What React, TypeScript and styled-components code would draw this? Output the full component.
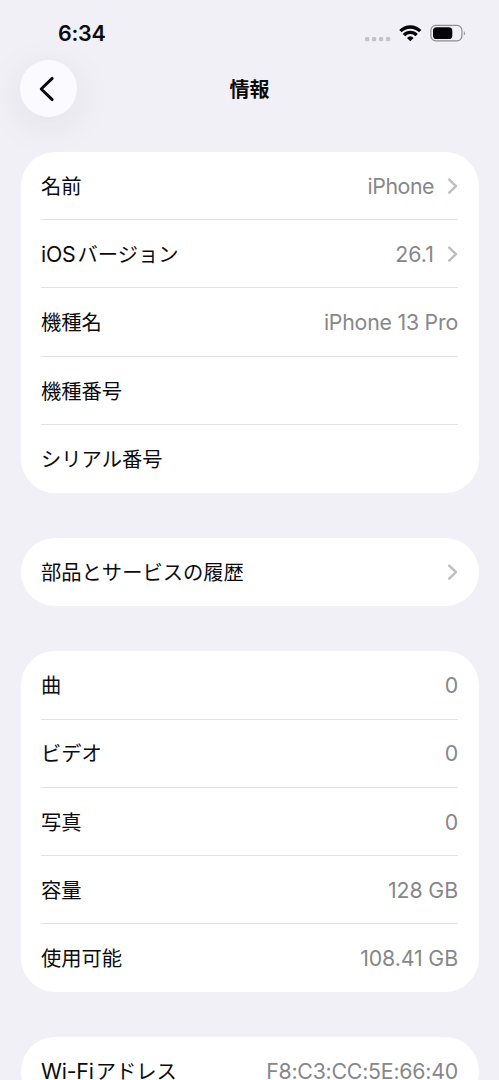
import React from 'react';
import styled, { createGlobalStyle } from 'styled-components';

const GlobalStyle = createGlobalStyle`
  html, body { margin: 0; background: #f1f0f6; }
  body { height: 1080px; overflow: hidden; }
  * { box-sizing: border-box; }
`;

const Screen = styled.main`
  width: 499px;
  height: 1080px;
  overflow: hidden;
  background: #f1f0f6;
  color: #0b0b0d;
  font-family: Inter, 'Noto Sans CJK JP', sans-serif;
`;

const StatusBar = styled.div`
  display: flex;
  align-items: center;
  justify-content: space-between;
  height: 60px;
  padding: 6px 33px 0 58px;
`;

const Clock = styled.time`
  font-size: 21.5px;
  font-weight: 600;
  line-height: 26px;
  letter-spacing: -0.3px;
`;

const StatusIcons = styled.div`
  display: flex;
  align-items: center;
  height: 26px;
  svg { display: block; }
`;

const NavBar = styled.header`
  display: grid;
  grid-template-columns: 57px 1fr 57px;
  align-items: center;
  height: 57px;
  padding: 0 20px;
`;

const BackButton = styled.button`
  display: grid;
  place-items: center;
  width: 57px;
  height: 57px;
  padding: 0 2px 0 0;
  border: 0;
  border-radius: 50%;
  background: #fbfaff;
  box-shadow: 0 8px 40px rgba(40, 40, 60, 0.08);
  svg { display: block; }
`;

const Title = styled.h1`
  margin: 0;
  padding-top: 2px;
  text-align: center;
  font-size: 20px;
  font-weight: 700;
  line-height: 28px;
`;

const Groups = styled.div`
  display: flex;
  flex-direction: column;
  gap: 45px;
  padding: 35px 20.5px 0;
`;

const Card = styled.section`
  padding: 0 20.5px;
  border-radius: 34px;
  background: #fff;
`;

const Row = styled.div`
  display: flex;
  align-items: center;
  justify-content: space-between;
  height: 68.22px;
  border-bottom: 1px solid #e2e2e4;
  &:last-child { border-bottom-color: transparent; }
`;

const Label = styled.span`
  padding-top: 2.5px;
  font-size: 20.3px;
  line-height: 30px;
  white-space: nowrap;
`;

const Latin = styled.span`
  margin-right: 2px;
  font-size: 21.3px;
  line-height: 1;
  letter-spacing: -0.2px;
`;

const Value = styled.span<{ $spacing?: number }>`
  display: flex;
  align-items: center;
  gap: 13px;
  padding-top: 0.6px;
  color: #87878a;
  font-size: 21.3px;
  line-height: 30px;
  letter-spacing: ${p => p.$spacing ?? -0.22}px;
  white-space: nowrap;
  svg { display: block; }
`;

const Chevron = () => (
  <svg width="11" height="18" viewBox="0 0 11 18" fill="none" stroke="#bfbfc2" strokeWidth="2.5" strokeLinecap="round" strokeLinejoin="round">
    <path d="M2.2 2.6 9 9.1 2.2 15.6" />
  </svg>
);

type Item = { prefix?: string; label: string; value?: string; spacing?: number; link?: boolean };

const groups: Item[][] = [
  [
    { label: '名前', value: 'iPhone', spacing: -0.45, link: true },
    { prefix: 'iOS', label: 'バージョン', value: '26.1', spacing: 0.1, link: true },
    { label: '機種名', value: 'iPhone 13 Pro' },
    { label: '機種番号' },
    { label: 'シリアル番号' },
  ],
  [{ label: '部品とサービスの履歴', link: true }],
  [
    { label: '曲', value: '0' },
    { label: 'ビデオ', value: '0' },
    { label: '写真', value: '0' },
    { label: '容量', value: '128 GB', spacing: -0.1 },
    { label: '使用可能', value: '108.41 GB', spacing: -0.1 },
  ],
  [{ prefix: 'Wi-Fi', label: 'アドレス', value: 'F8:C3:CC:5E:66:40' }],
];

export default function App() {
  return (
    <Screen>
      <GlobalStyle />
      <StatusBar>
        <Clock>6:34</Clock>
        <StatusIcons>
          <svg width="102" height="24" viewBox="364 21 102 24">
            <g fill="#c3c3c8">
              <rect x="365" y="37" width="4.2" height="4.2" rx="1.3" />
              <rect x="372" y="37" width="4.2" height="4.2" rx="1.3" />
              <rect x="379" y="37" width="4.2" height="4.2" rx="1.3" />
              <rect x="386" y="37" width="4.2" height="4.2" rx="1.3" />
            </g>
            <g fill="none" stroke="#050507" strokeWidth="3.3">
              <path d="M400.4 31.2a13.8 13.8 0 0 1 19.8 0" />
              <path d="M404 35.2a8.6 8.6 0 0 1 12.6 0" />
            </g>
            <path d="M407 37.9a4.8 4.8 0 0 1 6.6 0L410.3 41.2z" fill="#050507" />
            <rect x="430.9" y="25.4" width="31" height="15.4" rx="4.8" fill="none" stroke="#8d8d92" strokeWidth="1.2" />
            <rect x="433" y="27.2" width="19.3" height="11.8" rx="3.6" fill="#050507" />
            <path d="M463.8 31v4.6c1.5-.9 1.5-3.7 0-4.6z" fill="#8d8d92" />
          </svg>
        </StatusIcons>
      </StatusBar>
      <NavBar>
        <BackButton aria-label="戻る">
          <svg width="20" height="28" viewBox="0 0 20 28" fill="none" stroke="#09090b" strokeWidth="2.9" strokeLinecap="round" strokeLinejoin="round">
            <path d="M14.2 3.4 3.2 14l11 10.6" />
          </svg>
        </BackButton>
        <Title>情報</Title>
      </NavBar>
      <Groups>
        {groups.map((items, i) => (
          <Card key={i}>
            {items.map(item => (
              <Row key={item.label}>
                <Label>
                  {item.prefix && <Latin>{item.prefix}</Latin>}
                  {item.label}
                </Label>
                <Value $spacing={item.spacing}>
                  {item.value}
                  {item.link && <Chevron />}
                </Value>
              </Row>
            ))}
          </Card>
        ))}
      </Groups>
    </Screen>
  );
}
